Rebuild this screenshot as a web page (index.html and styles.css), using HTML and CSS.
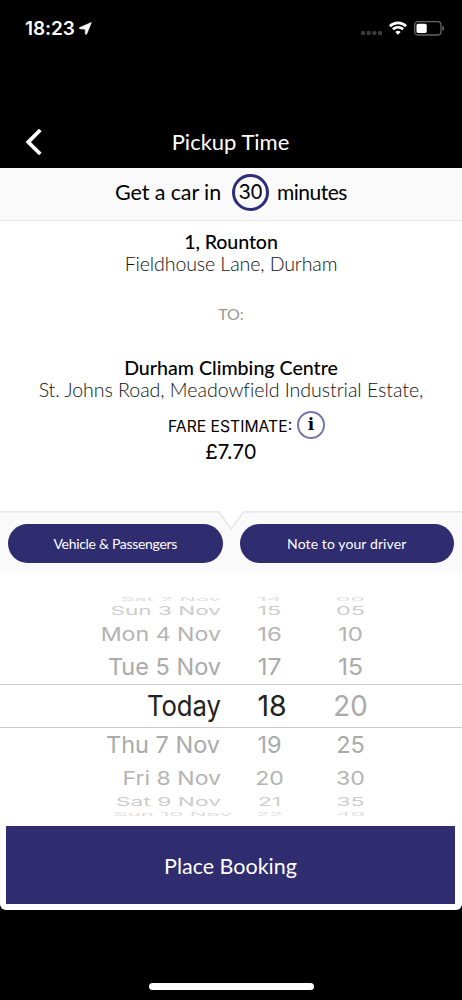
FILE: index.html
```html
<!DOCTYPE html>
<html lang="en">
<head>
<meta charset="utf-8">
<title>Pickup Time</title>
<link rel="stylesheet" href="styles.css">
</head>
<body>
<div class="phone">
  <div class="status">
    <span class="clock">18:23</span>
    <svg class="location" width="13" height="13" viewBox="0 0 13 13"><path d="M12.400 .4L7.600 12.200 6.400 12.200 6.300 7.200 .6 6.700 .6 5.600z" fill="#fff" stroke="#fff" stroke-width=".6" stroke-linejoin="round"/></svg>
    <svg class="signal" width="21" height="4" viewBox="0 0 21 4" fill="#3c3c3c"><rect width="4" height="4" rx="1.3"/><rect x="5.7" width="4" height="4" rx="1.3"/><rect x="11.4" width="4" height="4" rx="1.3"/><rect x="17" width="4" height="4" rx="1.3"/></svg>
    <svg class="wifi" width="18" height="14" viewBox="0 0 18 14" fill="none" stroke="#fff" stroke-width="2.6"><path d="M.9 5.2a11.6 11.6 0 0 1 16.2 0"/><path d="M3.9 8.3a7.3 7.3 0 0 1 10.2 0"/><path d="M6.3 11a4 4 0 0 1 5.4 0L9 13.7z" fill="#fff" stroke="none"/></svg>
    <svg class="battery" width="31" height="15" viewBox="0 0 31 15"><rect x=".7" y=".7" width="26.3" height="13.3" rx="3.2" fill="none" stroke="#666" stroke-width="1.3"/><rect x="2.5" y="2.7" width="10.2" height="9.2" rx="1.5" fill="#fff"/><path d="M28.4 4.7c2.4 1 2.4 4.3 0 5.3z" fill="#666"/></svg>
  </div>
  <header class="nav">
    <svg class="back" width="18" height="28" viewBox="0 0 18 28"><path d="M15.3 2L3.2 14.1 15.3 26" fill="none" stroke="#fff" stroke-width="3.8"/></svg>
    <h1 class="title"><span>Pickup Time</span></h1>
  </header>
  <main class="sheet">
    <section class="eta">
      <span class="eta-lead">Get a car in</span><span class="eta-number">30</span><span class="eta-unit">minutes</span>
    </section>
    <section class="trip">
      <div class="place pickup">1, Rounton</div>
      <div class="address from">Fieldhouse Lane, Durham</div>
      <div class="to">TO:</div>
      <div class="place dropoff">Durham Climbing Centre</div>
      <div class="address dest">St. Johns Road, Meadowfield Industrial Estate,</div>
      <div class="fare"><span class="fare-label">FARE ESTIMATE:</span><span class="info">i</span></div>
      <div class="price">£7.70</div>
    </section>
    <section class="options">
      <svg class="notch" width="462" height="20" viewBox="0 0 462 20"><path d="M0 .9H219L231 18 243.500 .9H462V20H0z" fill="#fafafa"/><path d="M0 .9H219L231 18 243.500 .9H462" fill="none" stroke="#e2e2e2" stroke-width="1.3"/></svg>
      <div class="buttons">
        <button class="pill vehicle">Vehicle &amp; Passengers</button>
        <button class="pill note">Note to your driver</button>
      </div>
    </section>
    <section class="picker">
      <div class="row r0"><span class="date">Sat 2 Nov</span><span class="hour">14</span><span class="minute">00</span></div>
      <div class="row r1"><span class="date">Sun 3 Nov</span><span class="hour">15</span><span class="minute">05</span></div>
      <div class="row r2"><span class="date">Mon 4 Nov</span><span class="hour">16</span><span class="minute">10</span></div>
      <div class="row r3"><span class="date">Tue 5 Nov</span><span class="hour">17</span><span class="minute">15</span></div>
      <div class="row r4"><span class="date">Today</span><span class="hour">18</span><span class="minute">20</span></div>
      <div class="row r5"><span class="date">Thu 7 Nov</span><span class="hour">19</span><span class="minute">25</span></div>
      <div class="row r6"><span class="date">Fri 8 Nov</span><span class="hour">20</span><span class="minute">30</span></div>
      <div class="row r7"><span class="date">Sat 9 Nov</span><span class="hour">21</span><span class="minute">35</span></div>
      <div class="row r8"><span class="date">Sun 10 Nov</span><span class="hour">22</span><span class="minute">40</span></div>
    </section>
    <button class="book">Place Booking</button>
  </main>
  <div class="home"></div>
</div>
</body>
</html>
```
FILE: styles.css
```css
* { box-sizing: border-box; }
body { margin: 0; background: #000; font-family: Lato, sans-serif; color: #000; }
button { border: 0; font: inherit; color: #fff; background: #2f2c70; padding: 0; }
svg { display: block; flex: none; }
.phone { width: 462px; height: 1000px; background: #000; overflow: hidden; }

.status { display: flex; align-items: flex-start; height: 115px; padding: 21px 17px 0 25px; }
.clock { width: 50px; font: 600 19px/15px Inter, sans-serif; color: #fff; letter-spacing: -.1px; white-space: nowrap; }
.location { margin: 1px 0 0 4px; }
.signal { margin: 10px 0 0 auto; }
.wifi { margin: 0 7px 0 7px; }

.nav { display: flex; align-items: center; height: 53px; padding: 0 44px 0 25px; }
.title { flex: 1; margin: 0; font-size: 22px; font-weight: 400; line-height: 28px; color: #fff; text-align: center; }

.sheet { height: 742px; background: #fff; border-radius: 0 0 6px 6px; }
.eta { display: flex; align-items: center; height: 53px; padding: 0 0 4px 115px; background: #fafafa; border-bottom: 1px solid #e8e8e8; font-size: 21.5px; white-space: nowrap; }
.eta-lead { width: 117px; letter-spacing: -.1px; padding-bottom: 1px; }
.eta-unit { font-size: 21px; letter-spacing: -.5px; padding-bottom: 1px; }
.eta-number { display: flex; align-items: center; justify-content: center; width: 37px; height: 37px; margin-right: 8px; border: 3px solid #2f2c78; border-radius: 50%; font: 400 20px/30px Inter, sans-serif; letter-spacing: -.5px; }

.trip { height: 290px; padding-top: 9px; text-align: center; white-space: nowrap; }
.place { font-size: 19.600px; line-height: 23px; font-weight: 500; }
.pickup { letter-spacing: -.1px; }
.address { font-size: 19.600px; line-height: 21px; font-weight: 300; color: #111; letter-spacing: -.05px; }
.from { letter-spacing: -.12px; }
.to { height: 82px; padding-top: 28px; font-size: 16px; line-height: 24px; color: #999; }
.fare { display: flex; align-items: center; height: 29px; padding-left: 168px; margin-top: 10px; }
.fare-label { width: 129px; font: 400 15.700px/20px Inter, sans-serif; padding-top: 5px; text-align: left; }
.info { width: 28px; height: 28px; border: 2px solid #7774ae; border-radius: 50%; font: 700 17px/23px "DejaVu Serif", serif; }
.price { font: 400 20.500px/25px Inter, sans-serif; }

.options { height: 62px; }
.buttons { display: flex; gap: 17px; height: 42px; padding: 0 8px; background: #fafafa; }
.pill { flex: 1; height: 39px; margin-top: -7px; border-radius: 20px; font-size: 14px; position: relative; }
.vehicle { letter-spacing: -.3px; }
.note { letter-spacing: .1px; }

.picker { height: 253px; padding-top: 23px; font-family: Inter, sans-serif; font-size: 23.500px; color: #aaa; }
.row { display: grid; grid-template-columns: 221px 97px 65px; align-items: center; white-space: nowrap; line-height: 0; }
.row span { text-align: center; transform: scale(var(--x, 1), var(--y, 1)); }
.row .date { text-align: right; transform: translateX(var(--shift, 0)) scale(var(--dx, 1), var(--y, 1)); transform-origin: right center; }
.r0 { height: 6px; --y: .2; --x: .97; --dx: .93; color: #ddd; }
.r1 { height: 17px; --y: .5; --x: 1; --dx: .96; color: #ccc; }
.r2 { height: 31px; --y: .8; --x: 1.020; --dx: .985; color: #b3b3b3; }
.r3 { height: 34px; --x: 1.050; }
.r4 { height: 44px; border: solid #ccc; border-width: 1px 0; font-size: 28.500px; color: #222; --dx: .9; }
.r4 .hour { margin-left: 5px; }
.r4 .minute { color: #aaa; --x: .97; }
.r5 { height: 35px; padding-bottom: 1px; --x: 1; --shift: -1px; }
.r6 { height: 31px; --y: .8; --x: .98; --dx: .98; color: #b3b3b3; }
.r7 { height: 16px; --y: .5; --x: .98; --dx: .97; color: #ccc; }
.r8 { height: 7px; --y: .2; --x: .95; --dx: .95; --shift: 11px; color: #ddd; }
.book { display: block; width: 449px; height: 78px; padding-top: 2px; margin-left: 6px; font-size: 21.500px; }
.home { width: 165px; height: 7px; margin: 73px 0 0 149px; border-radius: 4px; background: #fff; }
```
